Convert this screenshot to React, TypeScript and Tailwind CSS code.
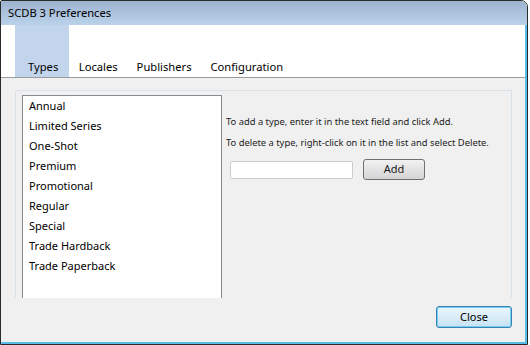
import React from 'react'

const types = [
  'Annual',
  'Limited Series',
  'One-Shot',
  'Premium',
  'Promotional',
  'Regular',
  'Special',
  'Trade Hardback',
  'Trade Paperback',
]

const tabs = ['Types', 'Locales', 'Publishers', 'Configuration']

export default function App() {
  return (
    <div className="w-[530px] h-[345px] bg-white font-['Noto_Sans',sans-serif] text-[11px] text-black">
      <div className="w-[528px] h-[345px] flex flex-col border border-[#2a2a2a] rounded-tr-[7px] rounded-tl-[2px] overflow-hidden">
        {/* title bar */}
        <div className="h-[24px] shrink-0 flex items-center pl-[7px] bg-gradient-to-b from-[#9db3cf] to-[#bad2ea] text-[11.2px] text-black">
          SCDB 3 Preferences
        </div>

        <div className="flex-1 flex flex-col border-r-2 border-b-2 border-[#58bde6]">
          {/* tab strip */}
          <div className="h-[53px] shrink-0 bg-white flex items-end pl-[14px] border-b border-[#9a9a9a] text-[11.2px]">
            {tabs.map((t, i) => (
              <div
                key={t}
                className={
                  i === 0
                    ? 'h-full flex items-end pl-[13px] pr-[11px] pb-[1px] bg-[#c3d5ed]'
                    : 'h-full flex items-end px-[9.5px] pb-[1px] whitespace-nowrap'
                }
              >
                {t}
              </div>
            ))}
          </div>

          {/* content */}
          <div className="flex-1 bg-[#f0f0f0] flex flex-col pl-[14px] pt-[12px]">
            <div className="w-[497px] h-[208px] flex border-t border-l border-r border-[#d8e1e7] rounded-t-[2px] pl-[6px] pt-[4px]">
              <div className="w-[200px] shrink-0 h-full bg-white border-t border-l border-r border-[#858a92] pl-[6px]">
                {types.map((t) => (
                  <div key={t} className="h-[20px] flex items-center">
                    {t}
                  </div>
                ))}
              </div>
              <div className="flex flex-col pl-[4px] pt-[17px] text-[9.4px] text-[#1c1c1c] whitespace-nowrap">
                <div className="h-[21px] flex items-center">To add a type, enter it in the text field and click Add.</div>
                <div className="h-[21px] flex items-center">To delete a type, right-click on it in the list and select Delete.</div>
                <div className="flex items-center gap-[10px] mt-[5px] pl-[4px] text-[11px]">
                  <div className="w-[123px] h-[18px] bg-white border border-[#c9ced4] rounded-[2px]" />
                  <div className="w-[62px] h-[21px] flex items-center justify-center border border-[#707070] rounded-[3px] bg-gradient-to-b from-[#f2f2f2] to-[#d4d4d4]">
                    Add
                  </div>
                </div>
              </div>
            </div>
            <div className="flex justify-end w-[497px] mt-[8px]">
              <div className="w-[76px] h-[22px] flex items-center justify-center border border-[#3c7fb1] rounded-[3px] bg-gradient-to-b from-[#eaf6fd] to-[#c8e2f2] shadow-[inset_0_0_0_1px_#6fd1f5]">
                Close
              </div>
            </div>
          </div>
        </div>
      </div>
    </div>
  )
}
